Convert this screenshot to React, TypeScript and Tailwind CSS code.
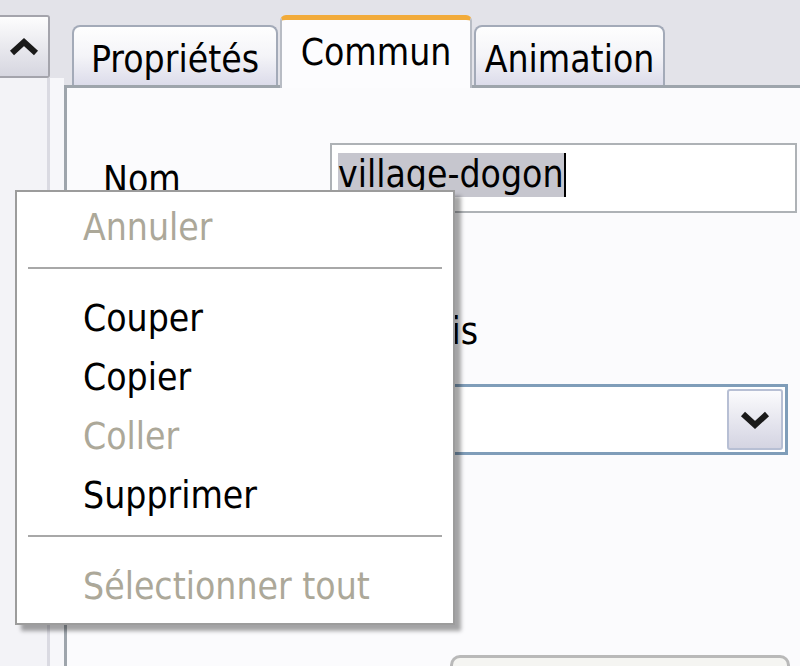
import React from "react";

const font = { fontFamily: '"DejaVu Sans Condensed", "DejaVu Sans", sans-serif' };

function Chevron({ up }: { up?: boolean }) {
  return (
    <svg width="32" height="20" viewBox="0 0 32 20">
      <polyline
        points={up ? "4,16 16,5 28,16" : "4,4 16,15 28,4"}
        fill="none"
        stroke="#1a1a1a"
        strokeWidth="6"
        strokeLinejoin="miter"
      />
    </svg>
  );
}

const menuItems: { label: string; disabled?: boolean; sep?: boolean }[] = [
  { label: "Annuler", disabled: true },
  { label: "", sep: true },
  { label: "Couper" },
  { label: "Copier" },
  { label: "Coller", disabled: true },
  { label: "Supprimer" },
  { label: "", sep: true },
  { label: "Sélectionner tout", disabled: true },
];

export default function App() {
  return (
    <div
      style={font}
      className="relative w-[800px] h-[666px] overflow-hidden bg-[#e3e3e9] text-[37px] leading-[43px] text-black select-none"
    >
      <div className="flex h-full">
        {/* left scroller strip */}
        <div className="w-[64px] shrink-0 flex flex-col">
          <div className="h-[15px] shrink-0" />
          <div className="w-[50px] h-[63px] shrink-0 flex items-center justify-center border-[2px] border-l-0 border-[#a4a4ac] rounded-r-[3px] bg-gradient-to-b from-[#fdfdfd] to-[#d6d6e0]">
            <Chevron up />
          </div>
          <div className="flex-1 flex">
            <div className="w-[50px] bg-[#f3f3f7] border-r-[3px] border-[#dadae2]" />
            <div className="flex-1 bg-[#f7f7fa]" />
          </div>
        </div>

        {/* tabs + panel */}
        <div className="flex-1 flex flex-col min-h-0">
          <div className="h-[88px] shrink-0 flex items-end pl-[8px] gap-[2px] border-b-[3px] border-[#9ea5ac]">
            <div className="w-[206px] h-[60px] pt-[11px] text-center rounded-t-[8px] border-[2px] border-b-0 border-[#a3aab8] bg-gradient-to-b from-[#fefefe] via-[#f4f4f8] to-[#dcdcea]">
              Propriétés
            </div>
            <div className="relative z-10 -mb-[3px] w-[192px] h-[73px] pt-[11px] text-center rounded-t-[6px] border-t-[5px] border-x-[2px] border-t-[#f2ab3a] border-x-[#b8bcc4] bg-[#fcfcfe]">
              Commun
            </div>
            <div className="w-[191px] h-[60px] pt-[11px] text-center rounded-t-[8px] border-[2px] border-b-0 border-[#a3aab8] bg-gradient-to-b from-[#fefefe] via-[#f4f4f8] to-[#dcdcea]">
              Animation
            </div>
          </div>

          <div className="flex-1 min-h-0 overflow-hidden flex flex-col border-l-[3px] border-[#9ea5ac] bg-[#fbfbfd] pl-[36px]">
            {/* Nom */}
            <div className="mt-[55px] shrink-0 flex items-center h-[70px]">
              <div className="w-[227px] pt-[2px]">Nom</div>
              <div className="w-[467px] h-[70px] border-[2px] border-[#aeb2b6] bg-white pl-[6px] pt-[8px] flex items-start">
                <span className="bg-[#c6c6ce] h-[44px] leading-[44px]">village-dogon</span>
                <span className="w-[2px] h-[44px] bg-black" />
              </div>
            </div>

            {/* partially hidden label */}
            <div className="mt-[97px] shrink-0 w-[375px] h-[45px] text-right whitespace-nowrap">
              Visible depuis
            </div>

            {/* select */}
            <div className="mt-[29px] shrink-0 w-[685px] h-[71px] border-[3px] border-[#7f9db9] bg-white flex justify-end items-center pr-[2px]">
              <div className="w-[56px] h-[61px] flex items-center justify-center rounded-[3px] border-[2px] border-[#b7bfd4] bg-gradient-to-b from-[#fbfbfd] to-[#d4d4e2]">
                <Chevron />
              </div>
            </div>

            {/* bottom button */}
            <div className="mt-[200px] shrink-0 ml-[347px] w-[340px] h-[40px] rounded-t-[10px] border-[3px] border-b-0 border-[#b9b9b9] bg-[#f5f5f2]" />
          </div>
        </div>
      </div>

      {/* context menu */}
      <div className="absolute left-[15px] top-[190px] w-[440px] h-[435px] bg-white border-[2px] border-[#9c9c9c] shadow-[6px_6px_4px_rgba(0,0,0,0.35)] pt-[6px]">
        {menuItems.map((item, i) =>
          item.sep ? (
            <div key={i} className="h-[32px] pt-[10px] px-[11px]">
              <div className="h-[2px] bg-[#a8a8a8]" />
            </div>
          ) : (
            <div
              key={i}
              className={`h-[59px] flex items-center pl-[66px] ${item.disabled ? "text-[#aca899]" : "text-black"}`}
            >
              {item.label}
            </div>
          )
        )}
      </div>
    </div>
  );
}
